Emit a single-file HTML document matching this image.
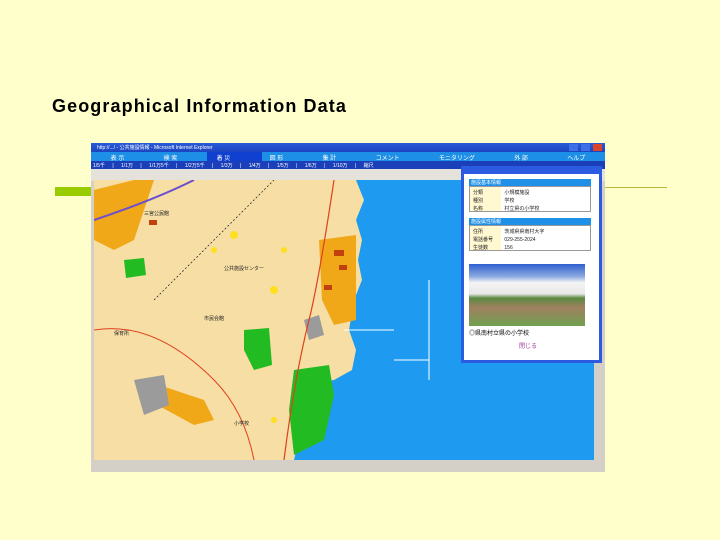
<!DOCTYPE html>
<html><head><meta charset="utf-8"><style>
body{margin:0;width:720px;height:540px;background:#FFFFCC;position:relative;overflow:hidden;font-family:"Liberation Sans","Noto Sans CJK JP",sans-serif}
.a{position:absolute}
.t{font-size:6px;color:#fff;white-space:nowrap}
.r{position:absolute;left:3px;font-size:5px;color:#222;white-space:nowrap}
</style></head><body>
<div class="a" style="left:52px;top:96px;font-size:18px;font-weight:bold;color:#000;letter-spacing:1.1px">Geographical Information Data</div>
<div class="a" style="left:55px;top:187px;width:40px;height:9px;background:#99CC00"></div>
<div class="a" style="left:600px;top:187px;width:67px;height:1px;background:#B5B53A"></div>

<div class="a" style="left:91px;top:143px;width:514px;height:329px;background:#D4D0C8;overflow:hidden">
 <div class="a" style="left:0;top:0;width:514px;height:9px;background:linear-gradient(#2A5BD7,#1C44C0)"><span class="t" style="position:absolute;left:6px;top:1px;font-size:5px">http://.../ - 公共施設情報 - Microsoft Internet Explorer</span>
  <div class="a" style="left:478px;top:1px;width:9px;height:7px;background:#3A6FE8"></div><div class="a" style="left:490px;top:1px;width:9px;height:7px;background:#3A6FE8"></div><div class="a" style="left:502px;top:1px;width:9px;height:7px;background:#D9442A"></div></div>
 <div class="a" style="left:0;top:9px;width:514px;height:9px;background:#1E8FE6"></div>
 <div class="a" style="left:116px;top:9px;width:55px;height:9px;background:#1040D0"></div>
 <div class="a t" style="top:10px;left:0;width:514px;display:flex;justify-content:space-around;font-size:6px"><span>表 示</span><span>検 索</span><span>着 災</span><span>図 形</span><span>集 計</span><span>コメント</span><span>モニタリング</span><span>外 部</span><span>ヘルプ</span></div>
 <div class="a" style="left:0;top:18px;width:514px;height:8px;background:#1A3FB8"></div>
 <div class="a t" style="top:19px;left:2px;font-size:5px;word-spacing:6px">1/5千 | 1/1万 | 1/1万5千 | 1/2万5千 | 1/3万 | 1/4万 | 1/5万 | 1/6万 | 1/10万 | 縮尺</div>
 <div class="a" style="left:0;top:26px;width:514px;height:12px;background:#E4E2DA"></div>
 <div class="a" style="left:3px;top:37px;width:500px;height:280px;background:#F6DEA4;overflow:hidden">
  <svg width="500" height="280" style="position:absolute;left:0;top:0">
   <path d="M262 0 H500 V280 H200 L205 260 L200 240 L205 220 L215 205 L240 200 L258 190 L262 170 L255 150 L260 120 L268 100 L264 80 L268 60 L262 40 L270 20 Z" fill="#1E9BF0"/>
   <path d="M0 10 L40 0 L60 0 L50 30 L40 60 L20 70 L0 60 Z" fill="#F0A818"/>
   <path d="M225 60 L262 55 L262 140 L240 145 L228 120 Z" fill="#F0A818"/>
   <path d="M50 200 L110 220 L120 240 L100 245 L45 215 Z" fill="#F0A818"/>
   <path d="M200 190 L235 185 L240 215 L230 260 L200 275 L195 230 Z" fill="#22BB22"/>
   <path d="M150 150 L175 148 L178 185 L160 190 L150 170 Z" fill="#22BB22"/>
   <path d="M30 80 L50 78 L52 95 L32 98 Z" fill="#22BB22"/>
   <path d="M40 200 L70 195 L75 225 L50 235 Z" fill="#9B9B9B"/>
   <path d="M210 140 L225 135 L230 155 L215 160 Z" fill="#9B9B9B"/>
   <path d="M0 40 Q60 20 100 0" stroke="#6A4FD0" stroke-width="2" fill="none"/>
   <path d="M240 0 Q225 100 215 140 Q200 200 190 280" stroke="#E04020" stroke-width="1.2" fill="none"/>
   <path d="M0 150 Q60 140 120 200 Q150 230 160 280" stroke="#E04020" stroke-width="1" fill="none"/>
   <path d="M60 120 L180 0" stroke="#333" stroke-width="0.8" stroke-dasharray="2 2" fill="none"/>
   <path d="M335 100 V200 M300 180 H335 M250 150 H300" stroke="#fff" stroke-width="1" fill="none"/>
   <g fill="#C04010"><rect x="55" y="40" width="8" height="5"/><rect x="240" y="70" width="10" height="6"/><rect x="245" y="85" width="8" height="5"/><rect x="230" y="105" width="8" height="5"/></g>
   <g fill="#FFE020"><circle cx="140" cy="55" r="4"/><circle cx="180" cy="110" r="4"/><circle cx="120" cy="70" r="3"/><circle cx="190" cy="70" r="3"/><circle cx="180" cy="240" r="3"/></g>
   <g font-size="5" fill="#222"><text x="50" y="35">三宮公民館</text><text x="130" y="90">公共施設センター</text><text x="20" y="155">保育所</text><text x="110" y="140">市民会館</text><text x="140" y="245">小学校</text></g>
  </svg>
 </div>
 <div class="a" style="left:0;top:317px;width:514px;height:12px;background:#D4D0C8"></div>

 <div class="a" style="left:370px;top:23px;width:141px;height:197px;background:#2B5BE0">
  <div class="a" style="left:3px;top:8px;width:135px;height:186px;background:#fff">
   <div class="a t" style="left:5px;top:5px;width:122px;height:7px;background:#1E90E8;font-size:5px;padding-left:2px;box-sizing:border-box">施設基本情報</div>
   <div class="a" style="left:5px;top:12px;width:122px;height:26px;border:1px solid #999;box-sizing:border-box;background:linear-gradient(90deg,#FFF8D0 31px,#fff 31px)">
    <div class="r" style="top:2px">分類　　　　 小規模施設</div><div class="r" style="top:10px">種別　　　　 学校</div><div class="r" style="top:18px">名称　　　　 村立県の小学校</div></div>
   <div class="a t" style="left:5px;top:44px;width:122px;height:7px;background:#1E90E8;font-size:5px;padding-left:2px;box-sizing:border-box">施設属性情報</div>
   <div class="a" style="left:5px;top:51px;width:122px;height:26px;border:1px solid #999;box-sizing:border-box;background:linear-gradient(90deg,#FFF8D0 31px,#fff 31px)">
    <div class="r" style="top:2px">住所　　　　 茨城県県南村大字</div><div class="r" style="top:10px">電話番号　　 029-255-2024</div><div class="r" style="top:18px">生徒数　　　 156</div></div>
   <div class="a" style="left:5px;top:90px;width:116px;height:62px;background:linear-gradient(#3060D0 0,#8AA8E0 20%,#F4F4F4 30%,#E8E8E8 48%,#5A8A40 55%,#A08060 70%,#70A050 100%)"></div>
   <div class="a" style="left:5px;top:154px;font-size:6px;color:#000">◎県南村立県の小学校</div>
   <div class="a" style="left:55px;top:167px;font-size:6px;color:#A040A0">閉じる</div>
  </div>
 </div>
</div>
</body></html>
